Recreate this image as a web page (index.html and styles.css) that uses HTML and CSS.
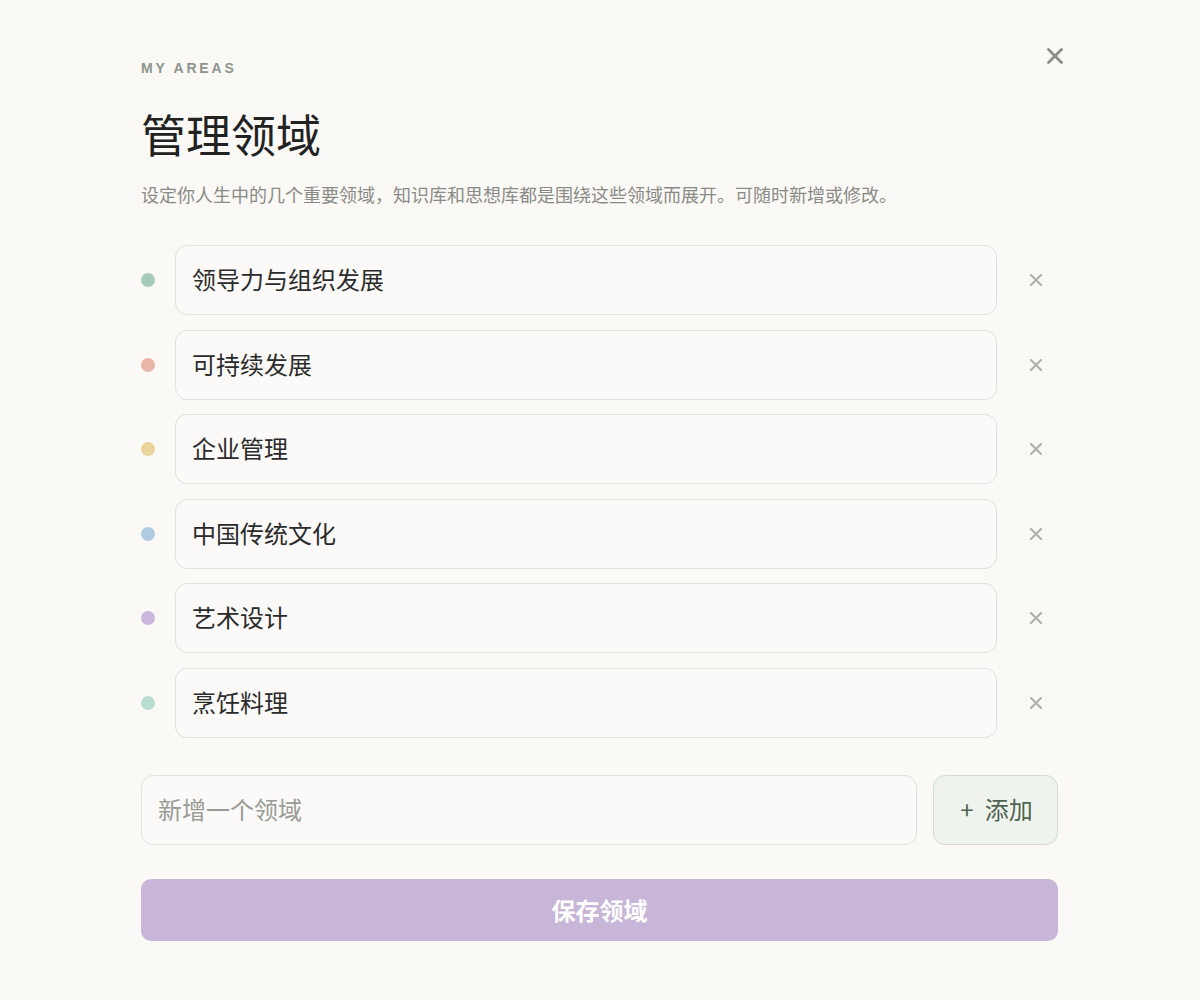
FILE: index.html
```html
<!DOCTYPE html>
<html lang="zh">
<head>
<meta charset="utf-8">
<title>管理领域</title>
<link rel="stylesheet" href="styles.css">
</head>
<body>
<div class="modal">
  <button class="close" aria-label="关闭">
    <svg viewBox="0 0 16 16" width="16" height="16"><path d="M1.5 1.5 L14.5 14.5 M14.5 1.5 L1.5 14.5" stroke="#8a8a88" stroke-width="2.8" stroke-linecap="round"/></svg>
  </button>
  <div class="eyebrow">MY AREAS</div>
  <h1 class="title">管理领域</h1>
  <p class="subtitle">设定你人生中的几个重要领域，知识库和思想库都是围绕这些领域而展开。可随时新增或修改。</p>

  <div class="list">
    <div class="row">
      <span class="dot dot-green"></span>
      <div class="field">领导力与组织发展</div>
      <button class="remove" aria-label="删除"><svg viewBox="0 0 12 12" width="12" height="12"><path d="M1 1 L11 11 M11 1 L1 11" stroke="#b0b0ae" stroke-width="2.2" stroke-linecap="round"/></svg></button>
    </div>
    <div class="row">
      <span class="dot dot-pink"></span>
      <div class="field">可持续发展</div>
      <button class="remove" aria-label="删除"><svg viewBox="0 0 12 12" width="12" height="12"><path d="M1 1 L11 11 M11 1 L1 11" stroke="#b0b0ae" stroke-width="2.2" stroke-linecap="round"/></svg></button>
    </div>
    <div class="row">
      <span class="dot dot-yellow"></span>
      <div class="field">企业管理</div>
      <button class="remove" aria-label="删除"><svg viewBox="0 0 12 12" width="12" height="12"><path d="M1 1 L11 11 M11 1 L1 11" stroke="#b0b0ae" stroke-width="2.2" stroke-linecap="round"/></svg></button>
    </div>
    <div class="row">
      <span class="dot dot-blue"></span>
      <div class="field">中国传统文化</div>
      <button class="remove" aria-label="删除"><svg viewBox="0 0 12 12" width="12" height="12"><path d="M1 1 L11 11 M11 1 L1 11" stroke="#b0b0ae" stroke-width="2.2" stroke-linecap="round"/></svg></button>
    </div>
    <div class="row">
      <span class="dot dot-purple"></span>
      <div class="field">艺术设计</div>
      <button class="remove" aria-label="删除"><svg viewBox="0 0 12 12" width="12" height="12"><path d="M1 1 L11 11 M11 1 L1 11" stroke="#b0b0ae" stroke-width="2.2" stroke-linecap="round"/></svg></button>
    </div>
    <div class="row">
      <span class="dot dot-mint"></span>
      <div class="field">烹饪料理</div>
      <button class="remove" aria-label="删除"><svg viewBox="0 0 12 12" width="12" height="12"><path d="M1 1 L11 11 M11 1 L1 11" stroke="#b0b0ae" stroke-width="2.2" stroke-linecap="round"/></svg></button>
    </div>
  </div>

  <div class="add-row">
    <div class="field placeholder">新增一个领域</div>
    <button class="add-btn"><span class="plus">+</span><span>添加</span></button>
  </div>

  <button class="save">保存领域</button>
</div>
</body>
</html>
```

FILE: styles.css
```css
* { box-sizing: border-box; }

html, body {
  margin: 0;
  padding: 0;
  background: #faf9f6;
}

body {
  font-family: "Noto Sans CJK SC", "Noto Sans", sans-serif;
  color: #262626;
}

.modal {
  position: relative;
  width: 1010px;
  height: 980px;
  margin: 10px auto 0;
  padding: 48px 47px 0 46px;
  background: #faf9f6;
}

.close {
  position: absolute;
  top: 30px;
  right: 34px;
  width: 32px;
  height: 32px;
  padding: 0;
  border: 0;
  background: transparent;
  display: flex;
  align-items: center;
  justify-content: center;
}

.eyebrow {
  font-family: "Liberation Sans", Arial, sans-serif;
  font-weight: 700;
  font-size: 14px;
  line-height: 20px;
  letter-spacing: 2.8px;
  color: #8f958d;
}

.title {
  margin: 29px 0 0;
  font-size: 45px;
  line-height: 54px;
  font-weight: 400;
  color: #222;
}

.subtitle {
  margin: 19px 0 0;
  font-size: 18px;
  line-height: 28px;
  color: #8a8a86;
}

.list {
  margin-top: 37px;
  display: flex;
  flex-direction: column;
  gap: 14.5px;
}

.row {
  display: flex;
  align-items: center;
}

.dot {
  flex: 0 0 14px;
  width: 14px;
  height: 14px;
  border-radius: 50%;
  margin-right: 20px;
}
.dot-green { background: #a8cbb9; }
.dot-pink { background: #e8b5a6; }
.dot-yellow { background: #e9d49c; }
.dot-blue { background: #b0cbe1; }
.dot-purple { background: #c9b7dc; }
.dot-mint { background: #b9dcd1; }

.field {
  flex: 1;
  height: 70px;
  display: flex;
  align-items: center;
  padding: 0 16px 3px;
  border: 1px solid #e2e0db;
  border-radius: 12px;
  background: #fbfaf8;
  font-size: 24px;
  color: #2b2b2b;
}

.remove {
  flex: 0 0 45px;
  height: 45px;
  margin-left: 16px;
  padding: 0;
  border: 0;
  background: transparent;
  display: flex;
  align-items: center;
  justify-content: center;
}

.add-row {
  margin-top: 37px;
  display: flex;
  gap: 16px;
}

.placeholder {
  color: #9a9a96;
}

.add-btn {
  flex: 0 0 125px;
  height: 70px;
  border: 1px solid #d5dbd2;
  border-radius: 12px;
  background: #eff3ee;
  color: #4f6351;
  font-family: "Noto Sans CJK SC", sans-serif;
  font-size: 24px;
  display: flex;
  align-items: center;
  justify-content: center;
  gap: 11px;
  padding: 0 0 3px 2px;
}

.plus {
  font-size: 24px;
  font-weight: 400;
}

.save {
  display: block;
  width: 100%;
  margin-top: 34px;
  height: 62px;
  border: 0;
  border-radius: 10px;
  background: #c8b6d8;
  color: #fff;
  font-family: "Noto Sans CJK SC", sans-serif;
  font-size: 24px;
  font-weight: 700;
  padding: 0;
}
```
